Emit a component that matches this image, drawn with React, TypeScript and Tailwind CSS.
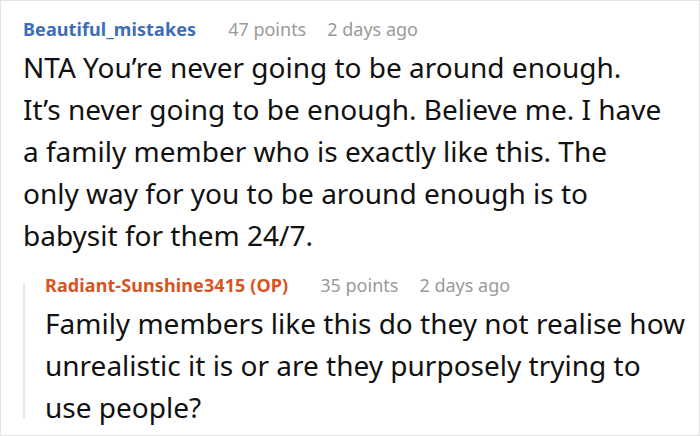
import React from 'react';

interface Comment {
  author: string;
  points: number;
  age: string;
  lines: string[];
  op?: boolean;
}

const parent: Comment = {
  author: 'Beautiful_mistakes',
  points: 47,
  age: '2 days ago',
  lines: [
    'NTA You’re never going to be around enough.',
    'It’s never going to be enough. Believe me. I have',
    'a family member who is exactly like this. The',
    'only way for you to be around enough is to',
    'babysit for them 24/7.',
  ],
};

const reply: Comment = {
  author: 'Radiant-Sunshine3415 (OP)',
  points: 35,
  age: '2 days ago',
  lines: [
    'Family members like this do they not realise how',
    'unrealistic it is or are they purposely trying to',
    'use people?',
  ],
  op: true,
};

const CommentMeta: React.FC<{ comment: Comment }> = ({ comment }) => (
  <div className="flex items-baseline text-[18px] leading-[24px]">
    <span
      className={`font-bold tracking-[0.1px] ${comment.op ? 'text-[#d9531e]' : 'text-[#3c6db8]'}`}
    >
      {comment.author}
    </span>
    <span className="ml-[32px] text-[#9a9a9a]">{comment.points} points</span>
    <span className="ml-[21px] text-[#9a9a9a]">{comment.age}</span>
  </div>
);

// one block per line so the breaks stay where the thread shows them
const CommentBody: React.FC<{ lines: string[] }> = ({ lines }) => (
  <div className="mt-[5px] text-[28px] leading-[42px] text-[#111111] whitespace-nowrap">
    {lines.map((line) => (
      <div key={line}>{line}</div>
    ))}
  </div>
);

export default function App() {
  return (
    <div
      className="w-[700px] h-[436px] bg-white border border-[#e3e3e3] pl-[22px] pt-[16px] overflow-hidden"
      style={{ fontFamily: '"Noto Sans", sans-serif' }}
    >
      <CommentMeta comment={parent} />
      <CommentBody lines={parent.lines} />

      <div className="mt-[17px] flex">
        <div className="w-[2px] shrink-0 bg-[#e6e6e6] mt-[11px] mb-[10px]" />
        <div className="ml-[20px]">
          <CommentMeta comment={reply} />
          <CommentBody lines={reply.lines} />
        </div>
      </div>
    </div>
  );
}
